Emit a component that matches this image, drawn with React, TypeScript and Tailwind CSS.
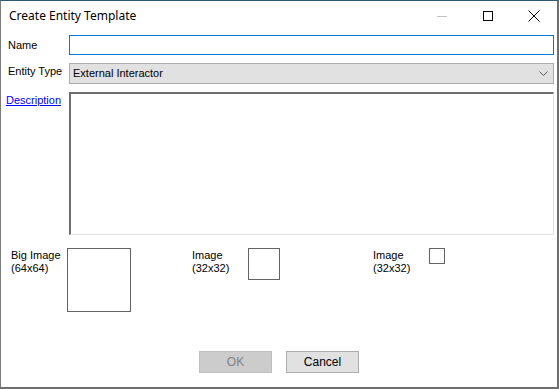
import React from 'react'

// WinForms style "Create Entity Template" dialog
function ImageSlot({ label, size }: { label: string; size: string }) {
  const [a, b] = label.split('\n')
  return (
    <div className="flex w-[181px]">
      <div className="w-[56px] pt-[1px] text-[11px] leading-[13px]">
        <div>{a}</div>
        <div>{b}</div>
      </div>
      <div className={`${size} border border-[#646464] bg-white`} />
    </div>
  )
}

export default function App() {
  return (
    <div
      className="w-[559px] h-[389px] bg-white border-t border-t-[#2f5873] border-l border-l-[#7a7a7a] border-r-2 border-r-[#6f6f6f] border-b-2 border-b-[#6f6f6f] text-black overflow-hidden"
      style={{ fontFamily: '"Liberation Sans", Arial, sans-serif' }}
    >
      {/* Title bar */}
      <div className="h-[30px] flex items-center">
        <div
          className="pl-[8px] flex-1 text-[12px] pb-[1px]"
          style={{ fontFamily: '"Noto Sans", "Open Sans", sans-serif' }}
        >
          Create Entity Template
        </div>
        <div className="w-[46px] h-full flex items-center justify-center">
          <div className="w-[10px] h-px bg-[#c4c4c4] mt-[1px]" />
        </div>
        <div className="w-[46px] h-full flex items-center justify-center">
          <div className="w-[10px] h-[10px] border border-black" />
        </div>
        <div className="w-[46px] h-full flex items-center justify-center">
          <svg width="12" height="12" viewBox="0 0 12 12">
            <path d="M0.5 0.5 L11.5 11.5 M11.5 0.5 L0.5 11.5" stroke="#000" strokeWidth="1" fill="none" />
          </svg>
        </div>
      </div>

      {/* Form rows */}
      <div className="flex mt-[4px]">
        <div className="w-[68px] pl-[7px] text-[11px] flex items-center">Name</div>
        <div className="w-[485px] h-[20px] border border-[#0078d7] bg-white" />
      </div>

      <div className="flex mt-[8px]">
        <div className="w-[68px] pl-[7px] text-[11px] pt-[2px] leading-[13px]">Entity Type</div>
        <div className="w-[485px] h-[21px] border border-[#adadad] bg-[#e1e1e1] flex items-center justify-between pl-[3px] pr-[5px] text-[11px]">
          <span>External Interactor</span>
          <svg width="9" height="5" viewBox="0 0 9 5">
            <path d="M0.5 0.5 L4.5 4.5 L8.5 0.5" stroke="#5a5a5a" strokeWidth="1" fill="none" />
          </svg>
        </div>
      </div>

      <div className="flex mt-[8px]">
        <div className="w-[68px] pl-[5px] pt-[2px] text-[11px] leading-[13px]">
          <span className="text-[#0000ff] underline">Description</span>
        </div>
        <div className="w-[485px] h-[143px] bg-white border-t-2 border-l-2 border-t-[#6e6e6e] border-l-[#6e6e6e] border-r border-b border-r-[#e3e3e3] border-b-[#e3e3e3]" />
      </div>

      {/* Image slots */}
      <div className="flex mt-[13px] pl-[10px]">
        <ImageSlot label={'Big Image\n(64x64)'} size="w-[64px] h-[64px]" />
        <ImageSlot label={'Image\n(32x32)'} size="w-[32px] h-[32px]" />
        <ImageSlot label={'Image\n(32x32)'} size="w-[16px] h-[16px]" />
      </div>

      {/* Buttons */}
      <div className="flex mt-[39px] pl-[198px] gap-[14px] text-[12px]">
        <div className="w-[73px] h-[22px] border border-[#bfbfbf] bg-[#cccccc] text-[#838383] flex items-center justify-center">
          OK
        </div>
        <div className="w-[73px] h-[22px] border border-[#adadad] bg-[#e1e1e1] flex items-center justify-center">
          Cancel
        </div>
      </div>
    </div>
  )
}
